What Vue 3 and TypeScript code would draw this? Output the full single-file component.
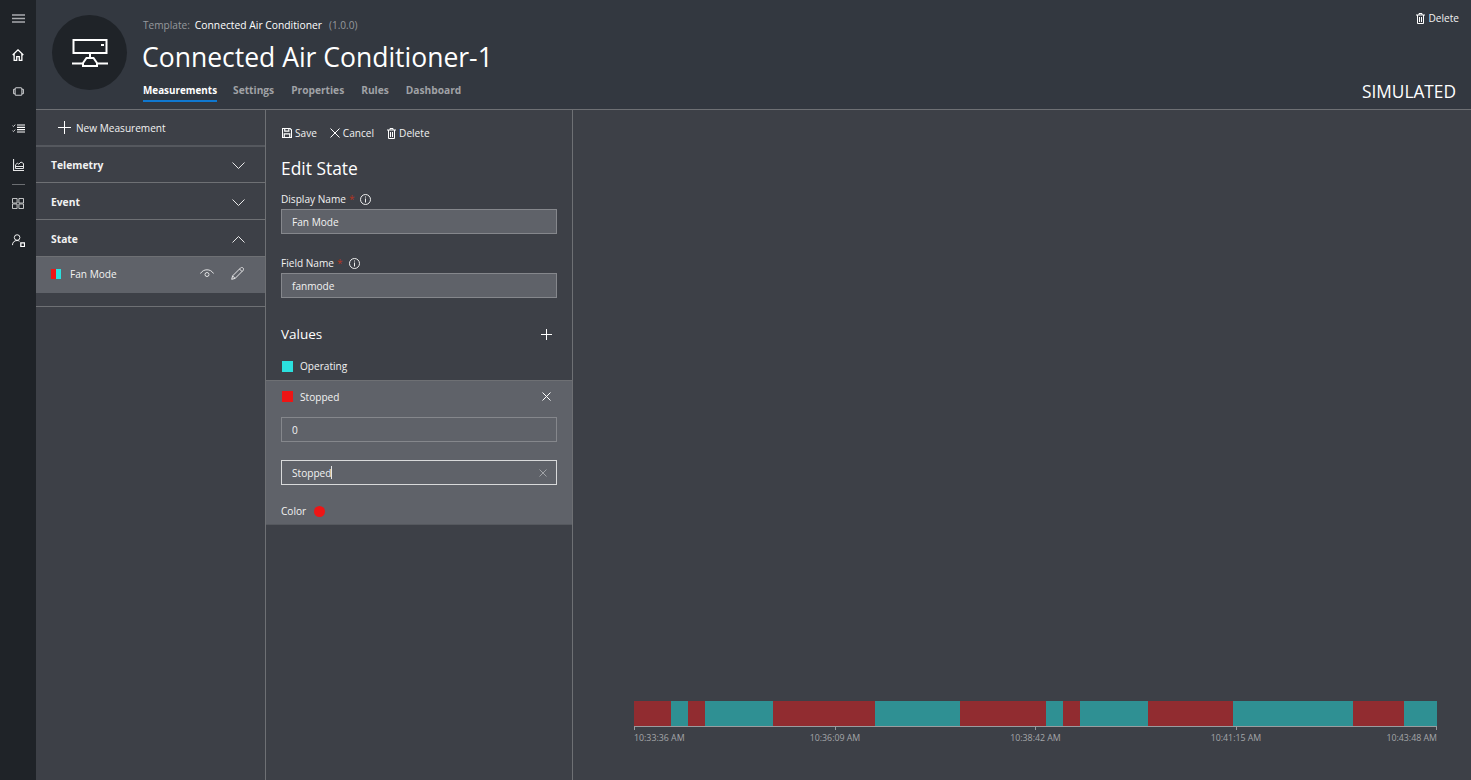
<template>
  <div class="app">
    <nav class="rail">
      <button class="rail-btn menu">
        <svg width="13" height="9" viewBox="0 0 13 9"><path d="M0 1h13M0 4.500h13M0 8h13" stroke="#a9abae" stroke-width="1.500" /></svg>
      </button>
      <button class="rail-btn">
        <svg width="12" height="12" viewBox="0 0 14 14" fill="none" stroke="#fff" stroke-width="1.500"><path d="M.8 7 7 1l6.200 6M2.500 5.800v7.400h3V9h3v4.200h3V5.800" /></svg>
      </button>
      <button class="rail-btn">
        <svg width="11" height="9" viewBox="0 0 14 12" fill="none" stroke="#c9cbce" stroke-width="1.400"><rect x="2.500" y="1" width="9" height="10" rx="1.500" /><path d="M2.500 3H1.200C.8 3 .5 3.300.5 3.700v4.600c0 .4.300.7.700.7h1.300M11.500 3h1.300c.4 0 .7.300.7.700v4.600c0 .4-.3.700-.7.700h-1.300" /></svg>
      </button>
      <button class="rail-btn">
        <svg width="13" height="9" viewBox="0 0 13 9" fill="none" stroke="#fff" stroke-width="1.200"><path d="M5 1h8M5 3.300h8M5 5.700h8M5 8h8" /><path d="m.5 1.700 1 .9L3.200.6M.5 6.700l1 .9 1.700-2" stroke="#c9cbce" stroke-width="1" /></svg>
      </button>
      <button class="rail-btn">
        <svg width="11" height="12" viewBox="0 0 11 12" fill="none" stroke="#e4e5e6"><path d="M.5 0v11.500H11" stroke-width="1.200" /><path d="M2.500 9.500h8V4.500L8 3 5.800 5.200 4.300 4.200l-1.800 1.600z" /><path d="M3 7.500h7" /></svg>
      </button>
      <div class="rail-sep"></div>
      <button class="rail-btn">
        <svg width="12" height="11" viewBox="0 0 13 12" fill="none" stroke="#d5d6d8"><path d="M.5.500h5v5h-5zM7.500.500h5v5h-5zM.5 6.500h5v5h-5zM7.500 6.500h5v5h-5z" /></svg>
      </button>
      <button class="rail-btn">
        <svg width="13" height="13" viewBox="0 0 14 14" fill="none" stroke="#fff"><circle cx="5.500" cy="3.800" r="3" /><path d="M.5 12c0-3 2-5 5-5 1 0 2 .3 2.600.8" /><path d="M9.500 9.500h4v4h-4z" stroke-width="1.400" /></svg>
      </button>
    </nav>

    <div class="main">
      <header class="head">
        <div class="avatar">
          <svg width="36" height="28" viewBox="0 0 36 28" fill="none" stroke="#fff" stroke-width="2">
            <rect x="1.500" y="1" width="33" height="13" />
            <path d="M18 14v5M14.500 19h7l3.500 5v3H11v-3zM0 24.500h11M25 24.500h11" />
            <path d="M29 6h3" />
          </svg>
        </div>
        <div class="head-text">
          <p class="template">
            <span class="dim">Template:</span>
            <span class="tpl-name">Connected Air Conditioner</span>
            <span class="dim">(1.0.0)</span>
          </p>
          <h1>Connected Air Conditioner-1</h1>
          <div class="tabs">
            <a
              v-for="tab in tabs"
              :key="tab"
              class="tab"
              :class="{ active: tab === 'Measurements' }"
            >{{ tab }}</a>
          </div>
        </div>
        <div class="head-right">
          <button class="act">
            <svg width="9" height="11" viewBox="0 0 9 11" fill="none" stroke="#fff"><path d="M0 2h9M3 2V.5h3V2M1.500 2v8.500h6V2M3.500 4v5M5.500 4v5" /></svg>
            Delete
          </button>
          <span class="simulated">SIMULATED</span>
        </div>
      </header>

      <div class="body">
        <aside class="list">
          <div class="new-row">
            <svg width="13" height="13" viewBox="0 0 13 13" stroke="#fff"><path d="M6.500 0v13M0 6.500h13" /></svg>
            New Measurement
          </div>
          <div v-for="group in groups" :key="group" class="group">
            <span>{{ group }}</span>
            <svg width="13" height="7" viewBox="0 0 13 7" fill="none" stroke="#e8e8e9">
              <path :d="group === 'State' ? 'M.5 6.500l6-6 6 6' : 'M.5.500l6 6 6-6'" />
            </svg>
          </div>
          <div class="item">
            <span class="chips"><i class="red"></i><i class="cyan"></i></span>
            <span class="item-name">Fan Mode</span>
            <svg class="eye" width="14" height="9" viewBox="0 0 14 9" fill="none" stroke="#e0e1e2"><path d="M.5 4.500C2 2 4.300.8 7 .8s5 1.200 6.500 3.700" /><circle cx="7" cy="5.500" r="2" /></svg>
            <svg width="13" height="13" viewBox="0 0 13 13" fill="none" stroke="#e8e8e9"><path d="M.7 12.300l.9-3.400L9.800.700c.5-.5 1.300-.5 1.800 0l.7.700c.5.5.5 1.300 0 1.800L4.100 11.400zM1.600 8.900l2.500 2.500M8.500 2l2.500 2.500" /></svg>
          </div>
          <div class="list-end"></div>
        </aside>

        <section class="editor">
          <div class="toolbar">
            <button class="act">
              <svg width="10" height="10" viewBox="0 0 11 11" fill="none" stroke="#fff" stroke-width="1.300"><path d="M.5.500h8.300l1.700 1.700v8.300H.500z" /><path d="M3 .5v3h4.500v-3M2.500 10.500V6.500h6v4" /></svg>
              Save
            </button>
            <button class="act">
              <svg width="10" height="10" viewBox="0 0 10 10" stroke="#fff"><path d="m.5.500 9 9M9.500.500l-9 9" /></svg>
              Cancel
            </button>
            <button class="act">
              <svg width="9" height="11" viewBox="0 0 9 11" fill="none" stroke="#fff"><path d="M0 2h9M3 2V.5h3V2M1.500 2v8.500h6V2M3.500 4v5M5.500 4v5" /></svg>
              Delete
            </button>
          </div>
          <h2>Edit State</h2>
          <div class="field first">
            <label>Display Name <em>*</em>
              <svg class="info" width="11" height="11" viewBox="0 0 11 11" fill="none" stroke="#eee"><circle cx="5.500" cy="5.500" r="5" /><path d="M5.500 4.500v4M5.500 2.500v1" /></svg>
            </label>
            <div class="input filled">Fan Mode</div>
          </div>
          <div class="field second">
            <label>Field Name <em>*</em>
              <svg class="info" width="11" height="11" viewBox="0 0 11 11" fill="none" stroke="#eee"><circle cx="5.500" cy="5.500" r="5" /><path d="M5.500 4.500v4M5.500 2.500v1" /></svg>
            </label>
            <div class="input filled">fanmode</div>
          </div>
          <div class="values-head">
            <span>Values</span>
            <svg width="11" height="11" viewBox="0 0 11 11" stroke="#fff"><path d="M5.500 0v11M0 5.500h11" /></svg>
          </div>
          <div class="value-row">
            <i class="swatch cyan"></i>Operating
          </div>
          <div class="value-open">
            <div class="value-top">
              <span class="value-label"><i class="swatch red"></i>Stopped</span>
              <svg width="9" height="9" viewBox="0 0 9 9" stroke="#fff"><path d="m.5.500 8 8M8.500.500l-8 8" /></svg>
            </div>
            <div class="input">0</div>
            <div class="input focused">
              <span>Stopped<span class="caret"></span></span>
              <svg width="8" height="8" viewBox="0 0 8 8" stroke="#a0a2a6"><path d="m.5.500 7 7M7.500.500l-7 7" /></svg>
            </div>
            <div class="color-row">Color <i class="dot"></i></div>
          </div>
        </section>

        <section class="chart">
          <div class="bar">
            <i
              v-for="(seg, i) in segments"
              :key="i"
              :class="seg.on ? 'seg-teal' : 'seg-red'"
              :style="{ width: seg.w + 'px' }"
            ></i>
          </div>
          <div class="ticks"><i v-for="t in times" :key="t"></i></div>
          <div class="times"><span v-for="t in times" :key="t">{{ t }}</span></div>
        </section>
      </div>
    </div>
  </div>
</template>

<script setup lang="ts">
const tabs = ['Measurements', 'Settings', 'Properties', 'Rules', 'Dashboard']
const groups = ['Telemetry', 'Event', 'State']
const times = ['10:33:36 AM', '10:36:09 AM', '10:38:42 AM', '10:41:15 AM', '10:43:48 AM']

// widths read off the timeline, in px
const segments = [
  { w: 37, on: false },
  { w: 17, on: true },
  { w: 17, on: false },
  { w: 68, on: true },
  { w: 102, on: false },
  { w: 85, on: true },
  { w: 86, on: false },
  { w: 17, on: true },
  { w: 17, on: false },
  { w: 68, on: true },
  { w: 85, on: false },
  { w: 120, on: true },
  { w: 51, on: false },
  { w: 33, on: true },
]
</script>

<style>
html,
body {
  margin: 0;
  background: #3d4047;
}
</style>

<style scoped>
* {
  box-sizing: border-box;
}

.app {
  display: flex;
  height: 780px;
  overflow: hidden;
  font-family: "Open Sans", "Noto Sans", sans-serif;
  font-size: 10.1px;
  color: #f2f2f2;
  background: #3d4047;
}

button {
  background: none;
  border: 0;
  padding: 0;
  color: inherit;
  font: inherit;
}

.rail {
  width: 36px;
  flex: none;
  background: #1f2328;
  display: flex;
  flex-direction: column;
  align-items: center;
}

.rail-btn {
  width: 36px;
  height: 36.75px;
  flex: none;
  display: flex;
  align-items: center;
  justify-content: center;
}

.rail-btn.menu {
  height: 36.5px;
}

.rail-sep {
  width: 13px;
  height: 1px;
  flex: none;
  background: #6b6e72;
  margin-top: 0.5px;
}

.main {
  flex: 1;
  min-width: 0;
  display: flex;
  flex-direction: column;
}

.head {
  height: 110px;
  flex: none;
  background: #333840;
  border-bottom: 1px solid #6e7074;
  display: flex;
  padding-left: 16px;
}

.avatar {
  width: 75px;
  height: 75px;
  margin-top: 15px;
  border-radius: 50%;
  background: #1f2328;
  display: flex;
  align-items: center;
  justify-content: center;
  flex: none;
}

.head-text {
  margin-left: 16px;
  padding-top: 18px;
}

.template {
  margin: 0;
  line-height: 15px;
  display: flex;
  gap: 5px;
}

.dim {
  color: #96999d;
}

.tpl-name {
  color: #fff;
  font-size: 10.3px;
  margin-right: 2px;
}

h1 {
  margin: 4px 0 0;
  font-size: 26.5px;
  font-weight: 400;
  line-height: 40px;
  color: #fff;
  margin-left: -1px;
}

.tabs {
  display: flex;
  gap: 17px;
  margin-top: 5px;
}

.tab {
  font-size: 10.2px;
  font-weight: 700;
  color: #a0a2a6;
  line-height: 17px;
  height: 20px;
}

.tab.active {
  font-size: 9.9px;
  color: #fff;
  border-bottom: 2px solid #0f78d0;
  margin-right: -1px;
}

.head-right {
  margin-left: auto;
  display: flex;
  flex-direction: column;
  align-items: flex-end;
  justify-content: space-between;
  padding: 11px 12px 7px 0;
}

.simulated {
  font-size: 17.3px;
  line-height: 20px;
  color: #fff;
  margin-right: 3px;
}

.act {
  display: inline-flex;
  align-items: center;
  gap: 4px;
  line-height: 14px;
}

.body {
  flex: 1;
  display: flex;
  min-height: 0;
}

.list {
  width: 230px;
  flex: none;
  border-right: 1px solid #6e7074;
}

.new-row {
  height: 37px;
  margin-bottom: -1px;
  display: flex;
  align-items: center;
  gap: 5px;
  padding-left: 22px;
  border-bottom: 2px solid #55585e;
}

.group {
  height: 37px;
  display: flex;
  align-items: center;
  justify-content: space-between;
  padding: 2px 20px 0 15px;
  font-size: 10.3px;
  font-weight: 700;
  border-bottom: 1px solid #6e7074;
}

.group:last-of-type {
  border-bottom: 0;
}

.item {
  height: 36px;
  background: #5f6269;
  display: flex;
  align-items: center;
  padding: 0 21px 3px 15px;
}

.chips {
  display: flex;
  margin-right: 9px;
}

.chips i {
  width: 5px;
  height: 10px;
}

.red {
  background: #ee1515;
}

.cyan {
  background: #2be0de;
}

.item-name {
  flex: 1;
}

.eye {
  margin-right: 17px;
}

.list-end {
  height: 14px;
  border-bottom: 1px solid #6e7074;
}

.editor {
  width: 307px;
  flex: none;
  border-right: 1px solid #6e7074;
}

.toolbar {
  display: flex;
  gap: 13px;
  padding: 16px 15px 0 16px;
}

.toolbar .act {
  gap: 3px;
}

h2 {
  margin: 16px 15px 0;
  font-size: 17.4px;
  font-weight: 400;
  line-height: 24px;
  color: #fff;
}

.field {
  margin: 0 15px;
}

.field.first {
  margin-top: 11px;
}

.field.second {
  margin-top: 21px;
}

label {
  display: flex;
  align-items: center;
  line-height: 14px;
  height: 16px;
  margin-bottom: 2px;
  gap: 3px;
}

label em {
  color: #b5341f;
  font-style: normal;
}

.info {
  margin-left: 3px;
}

.input {
  height: 25px;
  border: 1px solid #85878c;
  padding: 0 9px 0 10px;
  display: flex;
  align-items: center;
  justify-content: space-between;
  line-height: 14px;
}

.input.filled {
  background: #5f6269;
}

.input.focused {
  border-color: #d8d9da;
  margin-top: 18px;
}

.caret {
  display: inline-block;
  width: 1px;
  height: 13px;
  background: #e6e6e6;
  vertical-align: -2px;
}

.values-head {
  display: flex;
  justify-content: space-between;
  align-items: center;
  margin: 24px 20px 0 15px;
  height: 24px;
  font-size: 13.5px;
  color: #fff;
}

.value-row {
  display: flex;
  align-items: center;
  height: 34px;
  padding: 6px 16px 0;
  gap: 7px;
}

.swatch {
  width: 11px;
  height: 11px;
  flex: none;
}

.value-open {
  height: 145px;
  background: #5f6269;
  padding: 0 15px;
  border-top: 1px solid #6e7074;
  border-bottom: 1px solid #55585e;
}

.value-top {
  height: 31px;
  margin-bottom: 5px;
  display: flex;
  align-items: center;
  justify-content: space-between;
  padding-right: 6px;
  padding-left: 1px;
}

.value-label {
  display: flex;
  align-items: center;
  gap: 7px;
}

.color-row {
  display: flex;
  align-items: center;
  gap: 8px;
  margin-top: 18px;
  height: 16px;
}

.dot {
  width: 11px;
  height: 11px;
  border-radius: 50%;
  background: #ee1515;
}

.chart {
  flex: 1;
  min-width: 0;
  display: flex;
  flex-direction: column;
  justify-content: flex-end;
  padding: 0 34px 35px 61px;
}

.bar {
  display: flex;
  height: 26px;
  border-bottom: 1px solid #9a9c9f;
}

.bar i {
  display: block;
  flex: none;
}

.seg-red {
  background: #912c30;
}

.seg-teal {
  background: #2f9093;
}

.ticks {
  display: flex;
  justify-content: space-between;
  height: 3px;
}

.ticks i {
  width: 1px;
  height: 3px;
  background: #9a9c9f;
}

/* labels sit on their ticks, the outer two stay inside the axis */
.times {
  display: flex;
  justify-content: space-between;
  margin-top: 1px;
  font-size: 8.8px;
  line-height: 14px;
  color: #a4a6a9;
}

.times span {
  width: 1px;
  display: flex;
  justify-content: center;
  white-space: nowrap;
}

.times span:first-child {
  justify-content: flex-start;
}

.times span:last-child {
  justify-content: flex-end;
}
</style>
